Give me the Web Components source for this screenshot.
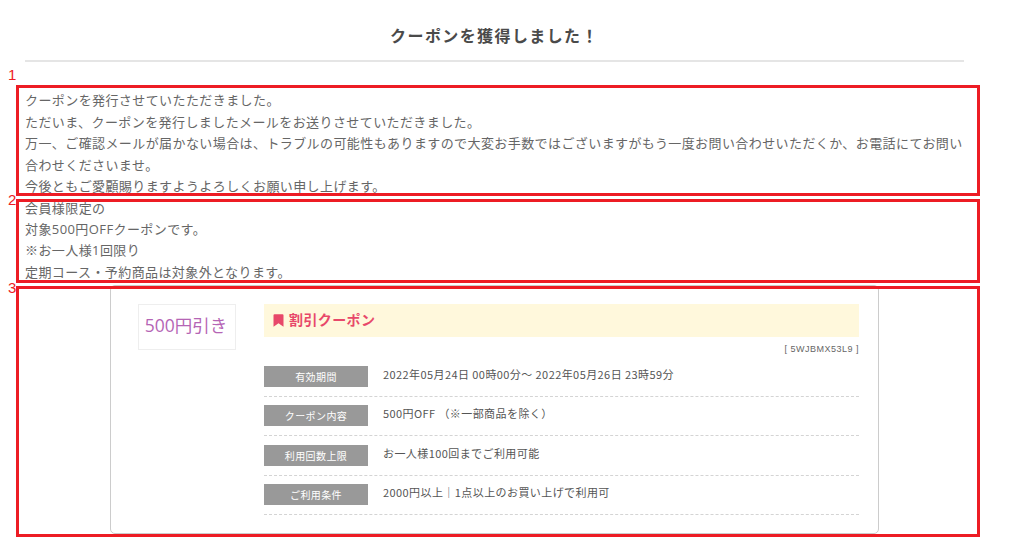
<!DOCTYPE html>
<html lang="ja"><head><meta charset="utf-8"><style>
html,body{margin:0;padding:0;background:#fff}
body{font-family:"Open Sans","Noto Sans CJK JP",sans-serif;color:#555;height:552px;overflow:hidden;position:relative}
</style></head><body>
<coupon-page>
<span slot="title">クーポンを獲得しました！</span>
<text-block>
<div>クーポンを発行させていたただきました。</div>
<div>ただいま、クーポンを発行しましたメールをお送りさせていただきました。</div>
<div>万一、ご確認メールが届かない場合は、トラブルの可能性もありますので大変お手数ではございますがもう一度お問い合わせいただくか、お電話にてお問い合わせくださいませ。</div>
<div>今後ともご愛顧賜りますようよろしくお願い申し上げます。</div>
</text-block>
<text-block>
<div>会員様限定の</div>
<div>対象500円OFFクーポンです。</div>
<div>※お一人様1回限り</div>
<div>定期コース・予約商品は対象外となります。</div>
</text-block>
<coupon-card>
<span slot="thumb">500円引き</span>
<span slot="name">割引クーポン</span>
<span slot="code">[ 5WJBMX53L9 ]</span>
<coupon-row label="有効期間">2022年05月24日 00時00分〜 2022年05月26日 23時59分</coupon-row>
<coupon-row label="クーポン内容">500円OFF （※一部商品を除く）</coupon-row>
<coupon-row label="利用回数上限">お一人様100回までご利用可能</coupon-row>
<coupon-row label="ご利用条件">2000円以上｜1点以上のお買い上げで利用可</coupon-row>
</coupon-card>
</coupon-page>
<mark-box n="1" style="top:85px;height:111px;--t:-21px"></mark-box>
<mark-box n="2" style="top:199px;height:84px;--t:-10px"></mark-box>
<mark-box n="3" style="top:286px;height:251px;--t:-9px"></mark-box>
<script>
function def(name,html,init){
  customElements.define(name,class extends HTMLElement{
    constructor(){super();this.attachShadow({mode:'open'}).innerHTML=html;}
    connectedCallback(){if(init)init(this);}
  });
}
def('coupon-page',`<style>
:host{display:block;width:939px;margin-left:25px}
h1{margin:0;padding-top:26px;height:34px;box-sizing:content-box;text-align:center;font-size:16px;line-height:20px;font-weight:700;letter-spacing:1.4px;color:#4a4a4a;border-bottom:2px solid #e5e5e5}
.body{padding-top:28.3px}
</style><h1><slot name="title"></slot></h1><div class="body"><slot></slot></div>`);
def('text-block',`<style>
:host{display:block;font-size:13px;line-height:21.45px;color:#666;letter-spacing:.41px}
</style><slot></slot>`);
def('coupon-card',`<style>
:host{display:block;box-sizing:border-box;width:769px;margin:2px 0 0 85px;height:249px;border:1px solid #ccc;border-radius:5px;padding:18px 19px 0 27px}
.wrap{display:flex;gap:28px;align-items:flex-start}
.thumb{box-sizing:border-box;width:98px;height:46px;border:1px solid #eee;padding:0 2px 5px 0;display:flex;align-items:center;justify-content:center;font-size:17.5px;color:#b565b5}
.main{flex:1;min-width:0}
.banner{height:33px;background:#fff8dc;display:flex;align-items:center;gap:5px;padding-left:9px;color:#e8486a;font-size:14px;font-weight:700;letter-spacing:.4px}
.banner span{padding-bottom:4px}
svg{display:block;flex:none}
.code{font:9px/12px "Liberation Sans",sans-serif;text-align:right;color:#666;letter-spacing:.5px;margin-top:6px;height:22.8px}
</style><div class="wrap"><div class="thumb"><slot name="thumb"></slot></div><div class="main">
<div class="banner"><svg width="11" height="13" viewBox="0 0 11 13"><path d="M0.5 1.2A1 1 0 0 1 1.5 .2H9.5A1 1 0 0 1 10.5 1.2V12.8L5.5 9.3 .5 12.8Z" fill="#e8486a"/></svg><span><slot name="name"></slot></span></div>
<div class="code"><slot name="code"></slot></div><slot></slot></div></div>`);
def('coupon-row',`<style>
:host{display:flex;align-items:flex-start;gap:15px;box-sizing:border-box;height:31px;margin-bottom:8.3px;border-bottom:1px dashed #d4d4d4;font-family:"Noto Sans CJK JP",sans-serif;font-size:11px;line-height:18px;color:#555;letter-spacing:.42px}
.label{box-sizing:border-box;flex:none;width:104px;height:21px;background:#999;color:#fff;font-size:10px;line-height:21px;text-align:center;letter-spacing:.4px}
.value{margin-top:-1px}
</style><div class="label"></div><div class="value"><slot></slot></div>`,el=>{el.shadowRoot.querySelector('.label').textContent=el.getAttribute('label');});
def('mark-box',`<style>
:host{position:absolute;left:16px;width:964px;box-sizing:border-box;border:3px solid #ed1c24;pointer-events:none}
.n{position:absolute;left:-11px;top:var(--t);font:15px/16px "Liberation Sans",sans-serif;color:#ed1c24}
</style><div class="n"></div>`,el=>{el.shadowRoot.querySelector('.n').textContent=el.getAttribute('n');});
</script>
</body></html>
